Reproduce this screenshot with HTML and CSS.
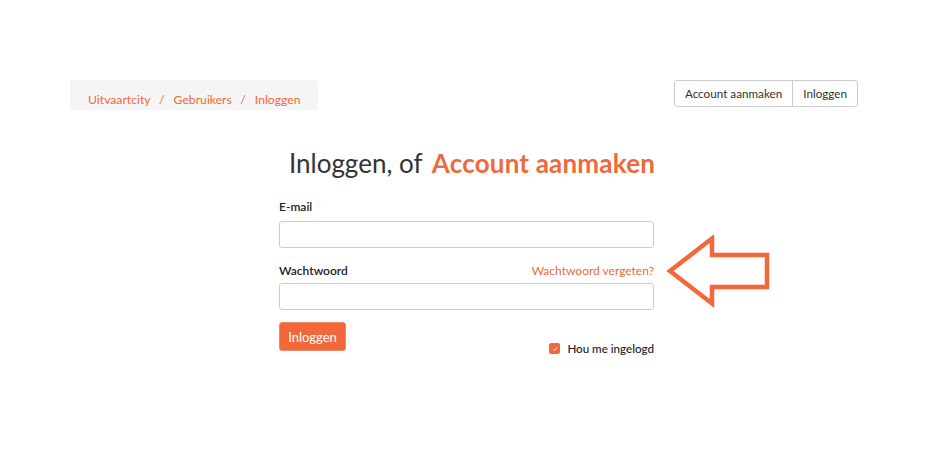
FILE: index.html
```html
<!DOCTYPE html>
<html lang="nl">
<head>
<meta charset="utf-8">
<title>Inloggen</title>
<link rel="stylesheet" href="styles.css">
</head>
<body>
<div class="page">
  <div class="topbar">
    <nav class="crumbs">
      <a href="#">Uitvaartcity</a><span class="sep">/</span><a href="#">Gebruikers</a><span class="sep">/</span><a href="#">Inloggen</a>
    </nav>
    <div class="btn-group">
      <a class="gbtn" href="#">Account aanmaken</a><a class="gbtn" href="#">Inloggen</a>
    </div>
  </div>

  <div class="login">
    <h1 class="title">Inloggen, of <a href="#">Account aanmaken</a></h1>
    <form class="form">
      <div class="label-row"><label>E-mail</label></div>
      <input class="field" type="text">
      <div class="label-row pw-row">
        <label>Wachtwoord</label>
        <a class="forgot" href="#">Wachtwoord vergeten?</a>
        <svg class="arrow" width="110" height="80" viewBox="0 0 110 80">
          <polygon points="5,36 47,3.5 47,20 102,20 102,52 47,52 47,68.5" fill="none" stroke="#f2683a" stroke-width="4.5" stroke-linejoin="miter"/>
        </svg>
      </div>
      <input class="field" type="password">
      <div class="actions">
        <button type="button" class="submit">Inloggen</button>
        <label class="remember"><span class="check"><svg width="6" height="6" viewBox="0 0 6 6"><path d="M1 3.2 L2.4 4.6 L5 1.4" fill="none" stroke="#fff" stroke-width="0.9"/></svg></span>Hou me ingelogd</label>
      </div>
    </form>
  </div>
</div>
</body>
</html>
```

FILE: styles.css
```css
* { box-sizing: border-box; }
html, body { margin: 0; padding: 0; background: #fff; }
body {
  font-family: Lato, "Open Sans", Arial, sans-serif;
  color: #333;
  width: 950px;
  height: 475px;
  overflow: hidden;
}
a { text-decoration: none; }

.page {
  padding: 80px 0 0 70px;
  width: 858px;
}

.topbar {
  display: flex;
  justify-content: space-between;
  align-items: flex-start;
}

.crumbs {
  background: #f5f5f5;
  width: 248px;
  height: 30px;
  padding: 12px 0 0 18px;
  font-size: 12.2px;
  line-height: 15px;
  border-radius: 2px;
}
.crumbs a { color: #f2683a; }
.crumbs .sep { color: #f2683a; margin: 0 9px 0 8.5px; }

.btn-group {
  display: flex;
  border: 1px solid #ccc;
  border-radius: 3px;
  height: 27px;
}
.gbtn {
  color: #333;
  font-size: 11.7px;
  line-height: 25px;
  padding: 0 10px;
}
.gbtn + .gbtn { border-left: 1px solid #ccc; }

.login {
  margin-left: 209px;
  width: 375px;
}

.title {
  font-weight: 400;
  font-size: 26px;
  line-height: 30px;
  margin: 38px 0 0 0;
  padding-left: 10px;
  color: #333;
  white-space: nowrap;
}
.title a {
  color: #f2683a;
  font-weight: 700;
  margin-left: 3px;
  letter-spacing: 0.2px;
}

.form { margin-top: 21px; }

.label-row {
  display: flex;
  justify-content: space-between;
  align-items: baseline;
  height: 15px;
  margin-bottom: 7px;
}
.label-row label {
  font-weight: 600;
  font-size: 12px;
  color: #222;
}
.pw-row { position: relative; margin-top: 15px; margin-bottom: 5px; }
.forgot { color: #f2683a; font-size: 12px; }
.arrow { position: absolute; left: 386px; top: -28px; }

.field {
  display: block;
  width: 375px;
  height: 27px;
  border: 1px solid #ccc;
  border-radius: 3px;
  background: #fff;
  margin: 0;
}

.actions {
  display: flex;
  justify-content: space-between;
  margin-top: 12px;
}
.submit {
  background: #f2683a;
  color: #fff;
  border: 1px solid #f08a66;
  border-radius: 3px;
  font-family: inherit;
  font-size: 13px;
  height: 29px;
  width: 67px;
  padding: 0;
}
.remember {
  display: flex;
  align-items: center;
  font-size: 11.6px;
  font-weight: 500;
  color: #222;
  margin-top: 21px;
  height: 11px;
}
.check {
  width: 11px;
  height: 11px;
  background: #f2683a;
  border-radius: 2px;
  display: inline-flex;
  align-items: center;
  justify-content: center;
  margin-right: 7px;
}
```
